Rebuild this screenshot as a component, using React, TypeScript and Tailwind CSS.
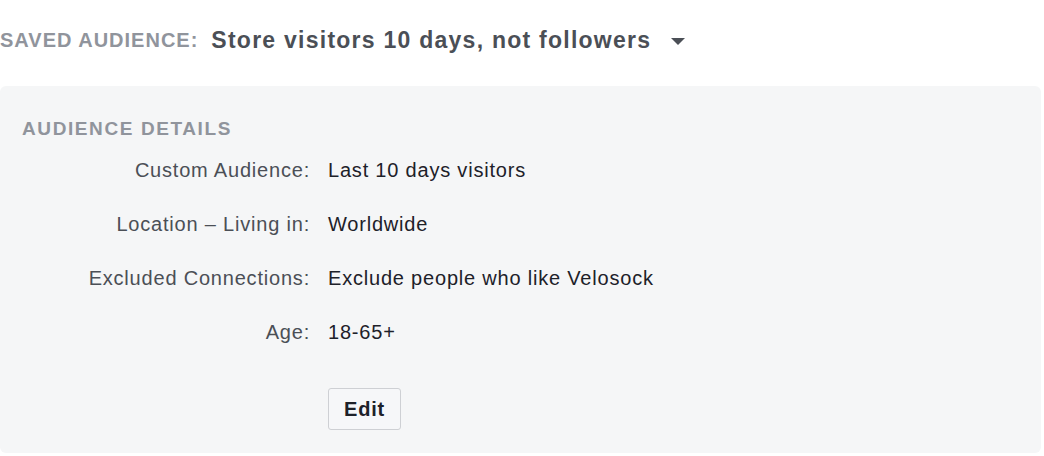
import { Fragment } from 'react'

const details = [
  { label: 'Custom Audience:', value: 'Last 10 days visitors' },
  { label: 'Location – Living in:', value: 'Worldwide' },
  { label: 'Excluded Connections:', value: 'Exclude people who like Velosock' },
  { label: 'Age:', value: '18-65+' },
]

export default function App() {
  return (
    <div
      className="h-[456px] w-[1044px] overflow-hidden bg-white"
      style={{ fontFamily: '"Liberation Sans", Arial, Helvetica, sans-serif' }}
    >
      {/* header */}
      <div className="flex items-center h-[28px] mt-[26px]">
        <span className="text-[20px] leading-[24px] font-bold tracking-[1px] text-[#90949c]">
          SAVED AUDIENCE:
        </span>
        <span className="ml-[13px] text-[23px] leading-[28px] font-bold tracking-[1.25px] text-[#4b4f56]">
          Store visitors 10 days, not followers
        </span>
        <svg className="ml-[20px] mt-[4px]" width="14" height="8" viewBox="0 0 14 8">
          <path d="M0 0 L14 0 L7 7 Z" fill="#4b4f56" />
        </svg>
      </div>

      {/* details panel */}
      <div className="mt-[32px] w-[1041px] rounded-md bg-[#f5f6f7] pt-[31px] pb-[23px]">
        <h3 className="pl-[22px] text-[19px] leading-[24px] font-bold tracking-[1.6px] text-[#90949c]">
          AUDIENCE DETAILS
        </h3>
        <div className="mt-[17px] grid grid-cols-[310px_1fr] gap-x-[18px] gap-y-[30px] text-[20px] leading-[24px] tracking-[0.8px]">
          {details.map((d) => (
            <Fragment key={d.label}>
              <div className="text-right text-[#4b4f56]">{d.label}</div>
              <div className="text-[#1d2129]">{d.value}</div>
            </Fragment>
          ))}
          <div />
          <div className="mt-[14px] flex">
            <button className="h-[42px] w-[73px] rounded-[3px] border border-[#ced0d4] bg-[#f6f7f9] text-[20px] font-bold tracking-[0.8px] text-[#1d2129]">
              Edit
            </button>
          </div>
        </div>
      </div>
    </div>
  )
}
